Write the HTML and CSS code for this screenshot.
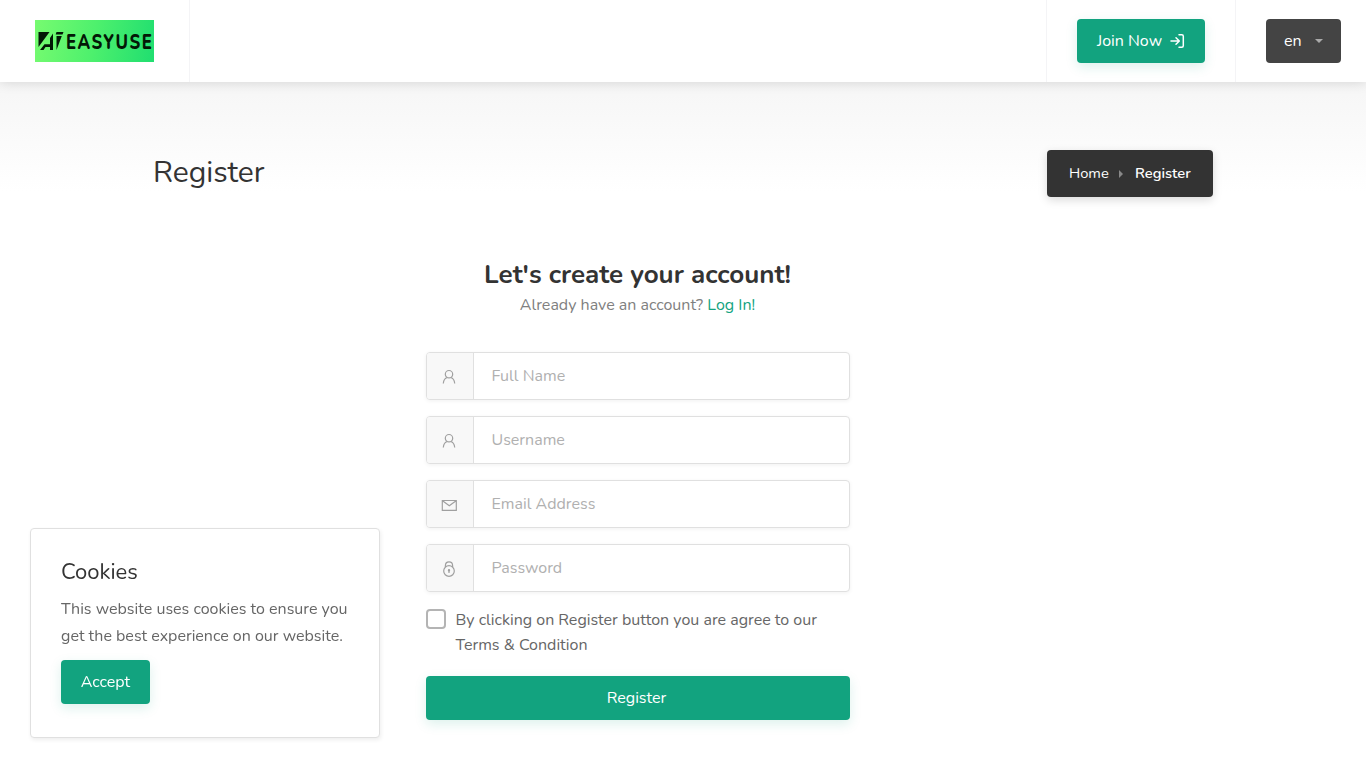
FILE: index.html
```html
<!DOCTYPE html>
<html lang="en">
<head>
    <meta charset="utf-8">
    <title>Register</title>
    <link rel="stylesheet" href="styles.css">
</head>
<body>

    <!-- Header -->
    <header class="header">
        <a href="#" class="logo">
            <svg width="119" height="42" viewBox="0 0 119 42">
                <path d="M3.500 12H14.500L3.500 27Z"/>
                <path d="M18 13.500V30H15V27H10.500L8.500 30H5L9.500 24.300H15V18Z"/>
                <path d="M21.500 12H28.500L27.500 14.500H20.700ZM21.500 16H26.800L21.500 30Z"/>
                <text transform="translate(31 29) scale(.78 1)" textLength="110" lengthAdjust="spacing">EASYUSE</text>
            </svg>
        </a>
        <div class="header-join">
            <a href="#" class="button join-button"><span>Join Now</span>
                <svg width="16" height="16" viewBox="0 0 16 16" fill="none" stroke="#fff" stroke-width="1.500" stroke-linecap="round" stroke-linejoin="round">
                    <path d="M2 8H10M7 4.700L10.300 8L7 11.300M10 1.700H12.800Q14.300 1.700 14.300 3.200V12.800Q14.300 14.300 12.800 14.300H10"/>
                </svg>
            </a>
        </div>
        <div class="header-lang">
            <button class="lang-button"><span>en</span><span class="caret"></span></button>
        </div>
    </header>

    <!-- Titlebar -->
    <div class="titlebar">
        <div class="container">
            <h2>Register</h2>
            <nav class="breadcrumbs">
                <a href="#">Home</a>
                <span class="separator"></span>
                <strong>Register</strong>
            </nav>
        </div>
    </div>

    <!-- Register form -->
    <main class="register-page">
        <div class="welcome-text">
            <h3>Let's create your account!</h3>
            <p>Already have an account? <a href="#">Log In!</a></p>
        </div>
        <form>
            <div class="input-with-icon">
                <i><svg width="16" height="16" viewBox="0 0 16 16"><circle cx="8" cy="5.200" r="3.700"/><path d="M2.300 14.500C2.600 11.200 4.300 9.100 6.200 8.500M9.800 8.500C11.700 9.100 13.400 11.200 13.700 14.500"/></svg></i>
                <input type="text" name="name" placeholder="Full Name">
            </div>
            <div class="input-with-icon">
                <i><svg width="16" height="16" viewBox="0 0 16 16"><circle cx="8" cy="5.200" r="3.700"/><path d="M2.300 14.500C2.600 11.200 4.300 9.100 6.200 8.500M9.800 8.500C11.700 9.100 13.400 11.200 13.700 14.500"/></svg></i>
                <input type="text" name="username" placeholder="Username">
            </div>
            <div class="input-with-icon">
                <i><svg width="16" height="16" viewBox="0 0 16 16"><path d="M1.300 3.500H15.300V13.300H1.300ZM1.500 3.800L8.300 8.800L15.100 3.800"/></svg></i>
                <input type="text" name="email" placeholder="Email Address">
            </div>
            <div class="input-with-icon">
                <i><svg width="16" height="16" viewBox="0 0 16 16"><circle cx="8" cy="10" r="5.300"/><path d="M4.400 6V4.500C4.400-.4 11.600-.4 11.600 4.500V6M8 9.500V12"/><circle cx="8" cy="9.300" r=".6"/></svg></i>
                <input type="password" name="password" placeholder="Password">
            </div>
            <label class="checkbox">
                <input type="checkbox" name="agree">
                <span>By clicking on Register button you are agree to our <br>Terms &amp; Condition</span>
            </label>
            <button class="button submit-button" type="button">Register</button>
        </form>
    </main>

    <!-- Cookie notice -->
    <div class="cookies">
        <h4>Cookies</h4>
        <p>This website uses cookies to ensure you<br>get the best experience on our website.</p>
        <button class="button accept-button">Accept</button>
    </div>

</body>
</html>
```
FILE: styles.css
```css
* {
    box-sizing: border-box;
}
body {
    margin: 0;
    height: 768px;
    overflow: hidden;
    font-family: Nunito, Lato, sans-serif;
    font-size: 16px;
    color: #666;
    background: #fff;
}
a {
    text-decoration: none;
}
h2, h3, h4, p {
    margin: 0;
    font-weight: 400;
}
button, input {
    font-family: inherit;
    font-size: 16px;
}

/* Header */
.header {
    position: relative;
    display: flex;
    height: 82px;
    background: #fff;
    box-shadow: 0 0 12px rgba(0, 0, 0, 0.15);
}
.header::before {
    content: "";
    order: 1;
    width: 36px;
    border-right: 1px solid #f4f4f6;
}
.logo {
    width: 119px;
    height: 42px;
    margin: 20px -1px 0 35px;
    background: linear-gradient(100deg, #77fb70, #4df06d 50%, #20de70);
}
.logo svg {
    display: block;
    fill: #031806;
}
.logo text {
    font-size: 21.5px;
    font-weight: 800;
}
.header-join {
    order: 2;
    margin-left: auto;
    padding: 19px 30px 0;
    border-left: 1px solid #f4f4f6;
}
.header-lang {
    order: 3;
    padding: 19px 25px 0 30px;
    border-left: 1px solid #f4f4f6;
}
.button {
    height: 44px;
    border: 0;
    border-radius: 4px;
    background: #12a37f;
    color: #fff;
    box-shadow: 0 4px 12px rgba(18, 163, 127, 0.15);
}
.join-button {
    display: flex;
    align-items: center;
    justify-content: space-between;
    width: 128px;
    padding: 0 20px;
}
.lang-button {
    display: flex;
    align-items: center;
    justify-content: space-between;
    width: 75px;
    height: 44px;
    padding: 0 18px;
    border: 0;
    border-radius: 4px;
    background: #444;
    color: #fff;
}
.caret {
    border: 4px solid transparent;
    border-top-color: #aaa;
    border-bottom: 0;
}

/* Titlebar */
.titlebar {
    height: 176px;
    padding-top: 68px;
    background: linear-gradient(#f6f6f6, #fff 110px);
}
.container {
    display: flex;
    justify-content: space-between;
    width: 1060px;
    margin: 0 auto;
}
.titlebar h2 {
    font-size: 30px;
    line-height: 46px;
    color: #333;
}
.breadcrumbs {
    display: flex;
    align-items: center;
    width: 166px;
    height: 47px;
    padding: 0 22px 1px;
    border-radius: 4px;
    background: #333;
    color: #fff;
    font-size: 14.7px;
    box-shadow: 0 3px 10px rgba(0, 0, 0, 0.15);
}
.breadcrumbs a {
    width: 40px;
    color: #fff;
}
.breadcrumbs strong {
    font-weight: 600;
}
.separator {
    margin: 2px 12px 0 10px;
    border: 4px solid transparent;
    border-left-color: #888;
    border-right: 0;
}

/* Register form */
.register-page {
    width: 424px;
    margin-left: 426px;
}
.welcome-text {
    height: 94px;
    padding-right: 1px;
    text-align: center;
}
.welcome-text h3 {
    font-size: 26px;
    font-weight: 700;
    line-height: 33px;
    color: #333;
}
.welcome-text p {
    line-height: 28px;
    color: #808080;
}
.welcome-text a {
    color: #12a37f;
}
.input-with-icon {
    display: flex;
    height: 48px;
    margin-bottom: 16px;
    border: 1px solid #e0e0e0;
    border-radius: 4px;
    background: #fff;
    box-shadow: 0 1px 4px rgba(0, 0, 0, 0.06);
    overflow: hidden;
}
.input-with-icon i {
    display: flex;
    flex: none;
    width: 47px;
    padding: 16px 0 0 14px;
    border-right: 1px solid #e0e0e0;
    background: #f8f8f8;
}
.input-with-icon svg {
    fill: none;
    stroke: #a0a0a0;
    stroke-width: 1.200;
}
.input-with-icon input {
    flex: 1;
    padding: 0 17.5px;
    border: 0;
    outline: 0;
    background: none;
}
.input-with-icon input::placeholder {
    color: #b0b0b0;
}
.checkbox {
    display: flex;
    gap: 9.5px;
    height: 68px;
    line-height: 25px;
}
.checkbox input {
    appearance: none;
    flex: none;
    width: 20px;
    height: 20px;
    margin: 1px 0 0;
    border: 2px solid #b4b4b4;
    border-radius: 4px;
    background: #fff;
}
.submit-button {
    width: 424px;
    padding: 0 3px 0 0;
}

/* Cookie notice */
.cookies {
    position: fixed;
    left: 30px;
    bottom: 30px;
    width: 350px;
    height: 210px;
    padding: 29px 30px;
    border: 1px solid #e0e0e0;
    border-radius: 4px;
    background: #fff;
    box-shadow: 1px 2px 4px rgba(0, 0, 0, 0.07);
}
.cookies h4 {
    font-size: 22px;
    line-height: 28px;
    color: #333;
}
.cookies p {
    margin: 10px 0;
    line-height: 27px;
    white-space: nowrap;
}
.accept-button {
    width: 89px;
    padding: 0;
}
```
